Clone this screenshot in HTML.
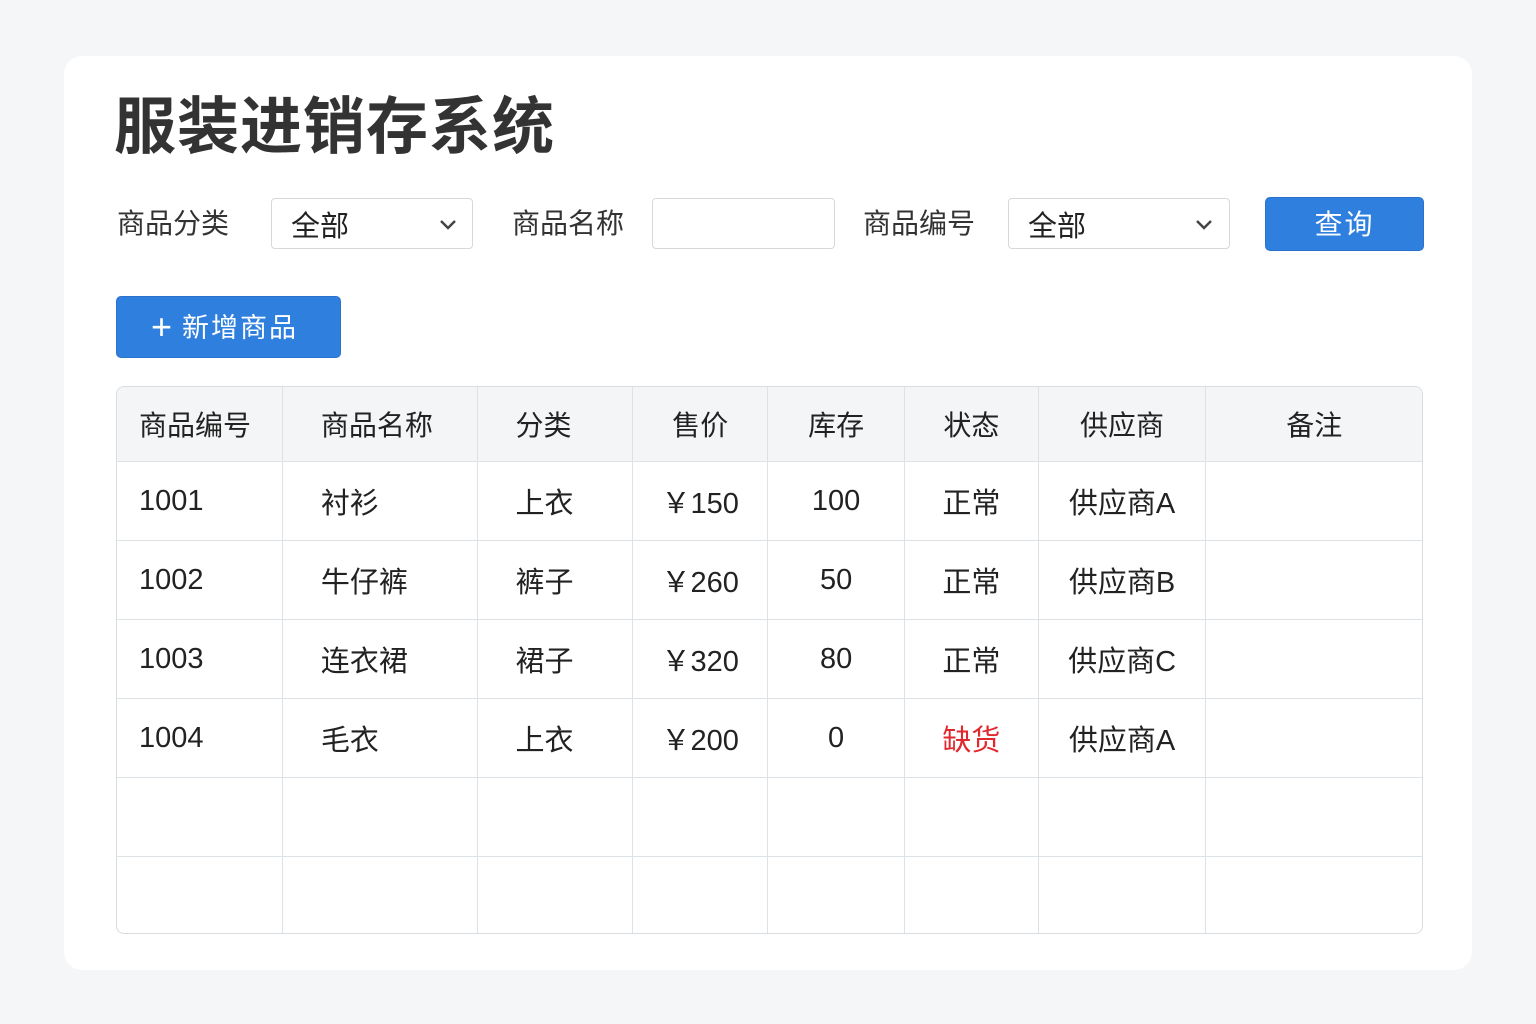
<!DOCTYPE html>
<html><head><meta charset="utf-8"><style>
*{margin:0;padding:0;box-sizing:border-box}
body{width:1536px;height:1024px;background:#f5f6f7;font-family:"Liberation Sans","Noto Sans CJK SC",sans-serif;color:#2a2a2a;position:relative;overflow:hidden}
.card{position:absolute;left:64px;top:56px;width:1408px;height:914px;background:#fff;border-radius:18px}
.a{position:absolute}
.title{left:114px;top:90px;font-size:62px;font-weight:bold;color:#333;letter-spacing:1px;line-height:76px}
.lbl{font-size:28px;top:202px;color:#333}
.box{border:1.5px solid #d6d9dc;border-radius:4px;background:#fff;height:51px;top:198px}
.box span{position:absolute;left:19px;top:4px;font-size:29px;color:#222}
.chev{position:absolute;top:16px}
.btn{background:#2f7fdf;color:#fff;border-radius:5px;border:1px solid #2a72cc}
table{position:absolute;left:116px;top:386px;width:1307px;border-collapse:separate;border-spacing:0;border:1.5px solid #d8dde2;border-radius:8px;overflow:hidden}
td{border-right:1.5px solid #dde2e6;border-bottom:1.5px solid #dde2e6;font-size:29px;height:79px;text-align:center;color:#222;padding:0}
td:last-child{border-right:none}
tr:last-child td{border-bottom:none;height:76px}
tr.h td{background:#f3f5f7;height:75px;font-size:28px}
td.l{text-align:left;padding-left:22px}
td.l2{text-align:left;padding-left:38px}
.red{color:#e0282e}
</style></head><body>
<div class="card"></div>
<div class="a title">服装进销存系统</div>
<div class="a lbl" style="left:117px">商品分类</div>
<div class="a box" style="left:271px;width:202px"><span>全部</span><svg class="chev" style="left:167px" width="18" height="18" viewBox="0 0 18 18"><path d="M2 6l7 7 7-7" fill="none" stroke="#444" stroke-width="2.5"/></svg></div>
<div class="a lbl" style="left:512px">商品名称</div>
<div class="a box" style="left:652px;width:183px"></div>
<div class="a lbl" style="left:863px">商品编号</div>
<div class="a box" style="left:1008px;width:222px"><span>全部</span><svg class="chev" style="left:186px" width="18" height="18" viewBox="0 0 18 18"><path d="M2 6l7 7 7-7" fill="none" stroke="#444" stroke-width="2.5"/></svg></div>
<div class="a btn" style="left:1265px;top:197px;width:159px;height:54px;font-size:28px;text-align:center;line-height:54px;letter-spacing:2px">查询</div>
<div class="a btn" style="left:116px;top:296px;width:225px;height:62px;font-size:27px;line-height:60px;padding-left:34px;letter-spacing:2px"><span style="font-size:36px;font-weight:300;vertical-align:-2px;margin-right:8px">+</span>新增商品</div>
<table>
<colgroup><col style="width:166px"><col style="width:195px"><col style="width:156px"><col style="width:135px"><col style="width:137px"><col style="width:134px"><col style="width:168px"><col style="width:216px"></colgroup>
<tr class="h"><td class="l">商品编号</td><td class="l2">商品名称</td><td class="l2">分类</td><td>售价</td><td>库存</td><td>状态</td><td>供应商</td><td>备注</td></tr>
<tr><td class="l">1001</td><td class="l2">衬衫</td><td class="l2">上衣</td><td>￥150</td><td>100</td><td>正常</td><td>供应商A</td><td></td></tr>
<tr><td class="l">1002</td><td class="l2">牛仔裤</td><td class="l2">裤子</td><td>￥260</td><td>50</td><td>正常</td><td>供应商B</td><td></td></tr>
<tr><td class="l">1003</td><td class="l2">连衣裙</td><td class="l2">裙子</td><td>￥320</td><td>80</td><td>正常</td><td>供应商C</td><td></td></tr>
<tr><td class="l">1004</td><td class="l2">毛衣</td><td class="l2">上衣</td><td>￥200</td><td>0</td><td class="red">缺货</td><td>供应商A</td><td></td></tr>
<tr><td></td><td></td><td></td><td></td><td></td><td></td><td></td><td></td></tr>
<tr><td></td><td></td><td></td><td></td><td></td><td></td><td></td><td></td></tr>
</table>
</body></html>
